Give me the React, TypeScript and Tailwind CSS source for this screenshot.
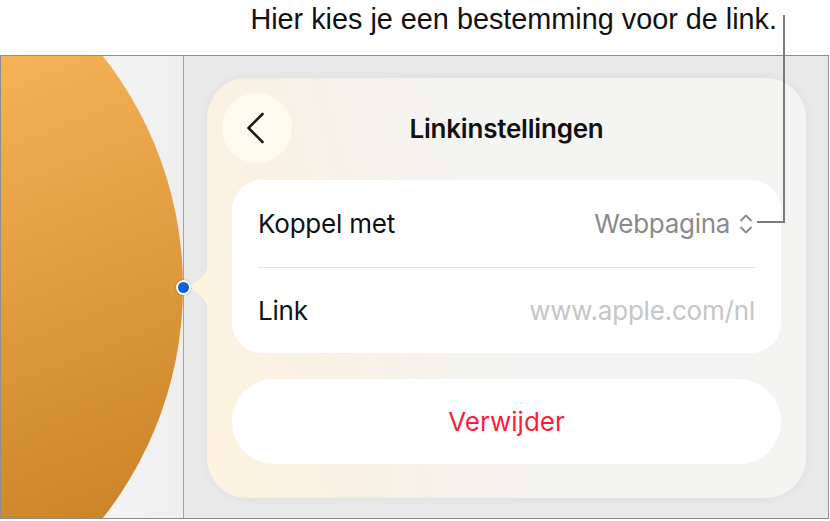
// Up/down selector glyph next to the chosen link target
const UpDownChevron = () => (
  <svg width="14" height="24" viewBox="0 0 14 24" fill="none" stroke="#8a8a8e" strokeWidth="1.8" strokeLinecap="round" strokeLinejoin="round">
    <path d="M2 8.5 L7 3.5 L12 8.5" />
    <path d="M2 15.5 L7 20.5 L12 15.5" />
  </svg>
);

const BackChevron = () => (
  <svg width="20" height="32" viewBox="0 0 20 32" fill="none" stroke="#1c1c1c" strokeWidth="2.6" strokeLinecap="round" strokeLinejoin="round">
    <path d="M16.5 2 L2.5 16 L16.5 30" />
  </svg>
);

const Row = ({ label, value }: { label: string; value: React.ReactNode }) => (
  <div className="flex items-center justify-between px-[26px]">
    <span className="text-[26px] text-[#111] tracking-[-0.2px]">{label}</span>
    {value}
  </div>
);

const LinkPopover = () => (
  <div className="relative w-[599px] h-[420px] rounded-[40px] bg-[linear-gradient(75deg,#fdf3df_0%,#f9f1e4_22%,#f4f4f2_48%)] shadow-[0_0_10px_rgba(0,0,0,0.05)] px-[25px] pt-[15px]">
    {/* pointer toward the selected shape */}
    <svg className="absolute left-[-18px] top-[185px]" width="20" height="48" viewBox="0 0 20 48">
      <path d="M20 0 Q18 13 3 22 Q0 24 3 26 Q18 35 20 48 Z" fill="#fdf3df" />
    </svg>

    <div className="-mx-[10px] h-[70px] grid grid-cols-[70px_1fr_70px] items-center">
      <button className="w-[70px] h-[70px] rounded-full bg-[#fefaee] flex items-center justify-center pr-[3px]">
        <BackChevron />
      </button>
      <h2 className="text-center text-[26px] font-semibold text-[#111] tracking-[-0.2px]">Linkinstellingen</h2>
      <div />
    </div>

    <div className="mt-[17px] bg-white rounded-[30px] flex flex-col">
      <div className="h-[87px] flex flex-col justify-center">
        <Row
          label="Koppel met"
          value={
            <span className="flex items-center gap-[9px] text-[26px] text-[#8a8a8e] tracking-[-0.3px] mr-[2px]">
              Webpagina
              <UpDownChevron />
            </span>
          }
        />
      </div>
      <div className="mx-[26px] h-px bg-[#e3e3e3]" />
      <div className="h-[85px] flex flex-col justify-center">
        <Row label="Link" value={<span className="text-[26px] text-[#c6c6c8] tracking-[-0.2px]">www.apple.com/nl</span>} />
      </div>
    </div>

    <button className="mt-[26px] w-full h-[85px] rounded-[42px] bg-white text-[26px] text-[#ff1a3c]">
      Verwijder
    </button>
  </div>
);

export default function App() {
  return (
    <div className="relative w-[830px] h-[521px] bg-white overflow-hidden font-['Inter',sans-serif]">
      <div className="h-[55px] flex justify-end pr-[53px]">
        <p className="pt-[1px] text-[28.8px] leading-[36px] text-[#111] font-['Liberation_Sans',Arial,sans-serif]">
          Hier kies je een bestemming voor de link.
        </p>
      </div>

      <div className="w-[829px] h-[464px] border border-[#8e8e8e] flex bg-[#e9e9e9]">
        <div className="w-[182px] h-full bg-[linear-gradient(90deg,#fbfbfb,#eeeeee)]">
          <svg width="182" height="462" viewBox="0 0 182 462">
            <defs>
              <linearGradient id="shapeFill" gradientUnits="userSpaceOnUse" x1="0" y1="0" x2="182" y2="462">
                <stop offset="0" stopColor="#f6b257" />
                <stop offset="1" stopColor="#c98226" />
              </linearGradient>
            </defs>
            <circle cx="-191" cy="231" r="373" fill="url(#shapeFill)" />
          </svg>
        </div>
        <div className="w-px h-full bg-[#7fa7ef]" />
        <div className="flex-1 pl-[23px] pt-[22px]">
          <LinkPopover />
        </div>
      </div>

      {/* callout leader line */}
      <svg className="absolute left-[750px] top-[14px]" width="40" height="212" viewBox="0 0 40 212">
        <path d="M34 1 L34 208 L7 208" fill="none" stroke="#7b7b7b" strokeWidth="2" />
      </svg>

      {/* selection handle on the guide */}
      <div className="absolute left-[176px] top-[280px] w-[15px] h-[15px] rounded-full bg-[#0b63d8] border-2 border-white shadow-[0_0_2px_rgba(0,0,0,0.3)]" />
    </div>
  );
}
